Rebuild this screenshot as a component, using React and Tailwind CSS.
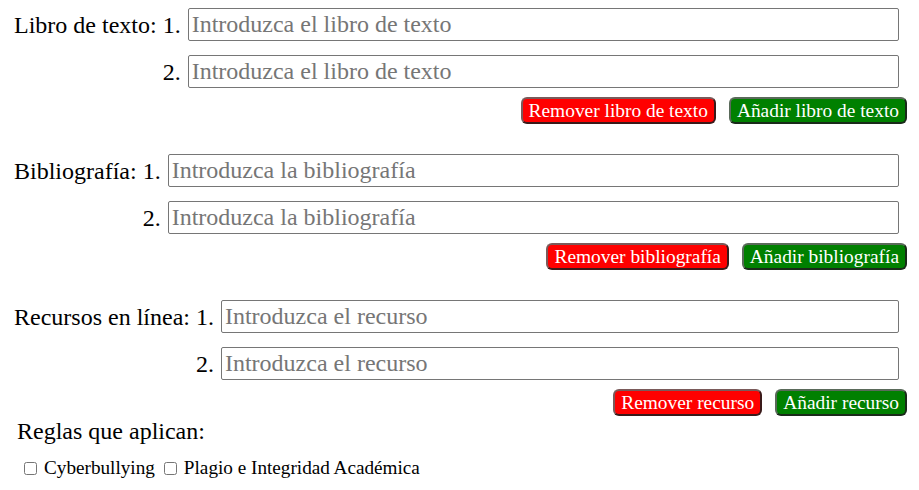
const sections = [
  {
    label: 'Libro de texto:',
    placeholder: 'Introduzca el libro de texto',
    remove: 'Remover libro de texto',
    add: 'Añadir libro de texto',
  },
  {
    label: 'Bibliografía:',
    placeholder: 'Introduzca la bibliografía',
    remove: 'Remover bibliografía',
    add: 'Añadir bibliografía',
  },
  {
    label: 'Recursos en línea:',
    placeholder: 'Introduzca el recurso',
    remove: 'Remover recurso',
    add: 'Añadir recurso',
  },
];

function Section({ label, placeholder, remove, add }) {
  return (
    <div className="flex flex-col">
      {/* Entries */}
      <div className="grid grid-cols-[auto_auto_1fr] items-center gap-y-[14px] pr-[8px]">
        {[1, 2].map((n) => (
          <div key={n} className="contents">
            <span className="whitespace-pre">{n === 1 ? label + ' ' : ''}</span>
            <span className="text-right pr-[7px]">{n}.</span>
            <input
              type="text"
              placeholder={placeholder}
              className="h-[33px] w-full border border-[#767676] rounded-[2px] px-[3px] bg-white text-[24px] placeholder:text-[#767676] outline-none"
            />
          </div>
        ))}
      </div>

      {/* Actions */}
      <div className="flex justify-end gap-[13px] mt-[9px]">
        <button className="h-[27px] px-[6px] rounded-[6px] border-2 border-t-[#7a5a5a] border-l-[#7a5a5a] border-b-[#3a1a1a] border-r-[#3a1a1a] bg-[#ff0000] text-white text-[19.4px] leading-[22px]">
          {remove}
        </button>
        <button className="h-[27px] px-[6px] rounded-[6px] border-2 border-t-[#5a6a5a] border-l-[#5a6a5a] border-b-[#1a2a1a] border-r-[#1a2a1a] bg-[#008000] text-white text-[19.4px] leading-[22px]">
          {add}
        </button>
      </div>
    </div>
  );
}

export default function App() {
  return (
    <div className="min-h-[490px] bg-white text-black font-['Liberation_Serif','Times_New_Roman',serif] text-[24px] leading-[28px] pt-[8px] pl-[14px] pr-[12px]">
      <div className="flex flex-col gap-[30px]">
        {sections.map((s) => (
          <Section key={s.label} {...s} />
        ))}
      </div>

      {/* Rules */}
      <p className="pl-[3px] pt-[1px]">Reglas que aplican:</p>
      <div className="flex items-center mt-[12px] pl-[6px] text-[19.2px] leading-[22px]">
        <label className="flex items-center">
          <input type="checkbox" className="m-[3px_3px_3px_4px] w-[13px] h-[13px]" />
          <span className="ml-[4px]">Cyberbullying</span>
        </label>
        <label className="flex items-center ml-[5px]">
          <input type="checkbox" className="m-[3px_3px_3px_4px] w-[13px] h-[13px]" />
          <span className="ml-[4px]">Plagio e Integridad Académica</span>
        </label>
      </div>
    </div>
  );
}
